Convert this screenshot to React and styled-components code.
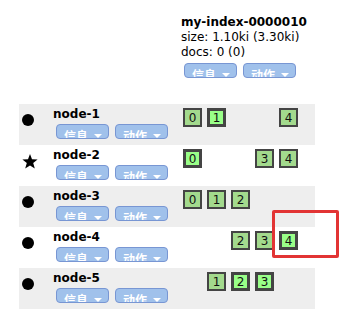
import styled, { createGlobalStyle } from "styled-components";

const GlobalStyle = createGlobalStyle`
    body{
        margin: 0;
        background: #ffffff;
        font-family: 'DejaVu Sans', Verdana, sans-serif;
        color: #000000;
    }
`;

const nodes = [
    { name: 'node-1', master: false, shards: [[0, false], [1, true], null, null, [4, false]] },
    { name: 'node-2', master: true, shards: [[0, true], null, null, [3, false], [4, false]] },
    { name: 'node-3', master: false, shards: [[0, false], [1, false], [2, false], null, null] },
    { name: 'node-4', master: false, shards: [null, null, [2, false], [3, false], [4, true]] },
    { name: 'node-5', master: false, shards: [null, [1, false], [2, true], [3, true], null] },
];

function MenuButton({ label }){
    return(
        <Button>
            <span>{label}</span>
            <Caret />
        </Button>
    );
}

function Star(){
    return(
        <svg width="16" height="15" viewBox="0 0 16 15">
            <polygon points="8,0 10,5.3 15.6,5.5 11.2,9 12.8,14.6 8,11.4 3.2,14.6 4.8,9 0.4,5.5 6,5.3" fill="#000" />
        </svg>
    );
}

export default function App (){
    return(
    <>
        <GlobalStyle />
        <Page>
            <Header>
                <Spacer />
                <IndexInfo>
                    <h1>my-index-0000010</h1>
                    <p>size: 1.10ki (3.30ki)</p>
                    <p>docs: 0 (0)</p>
                    <Buttons>
                        <MenuButton label="信息" />
                        <MenuButton label="动作" />
                    </Buttons>
                </IndexInfo>
            </Header>
            {nodes.map((n, i) => (
                <Row key={n.name} $shaded={i % 2 === 0}>
                    <IconCell $master={n.master}>
                        {n.master ? <Star /> : <Dot />}
                    </IconCell>
                    <NameCell>
                        <h2>{n.name}</h2>
                        <Buttons>
                            <MenuButton label="信息" />
                            <MenuButton label="动作" />
                        </Buttons>
                    </NameCell>
                    <ShardCell>
                        {n.shards.map((s, j) => s
                            ? <Shard key={j} $primary={s[1]}>{s[0]}</Shard>
                            : <Empty key={j} />
                        )}
                    </ShardCell>
                </Row>
            ))}
            <Highlight />
        </Page>
    </>);
}

const Page = styled.div`
    position: relative;
    padding-left: 19px;
    width: 296px;
`;
const Header = styled.div`
    display: flex;
    padding: 15px 0 26px 0;
`;
const Spacer = styled.div`
    width: 162px;
`;
const IndexInfo = styled.div`
    h1{
        margin: 0;
        font-size: 12px;
        font-weight: 700;
        line-height: 15px;
    }
    p{
        margin: 0;
        font-size: 12px;
        line-height: 15px;
    }
    & > div{
        margin-top: 3px;
    }
`;
const Row = styled.div`
    display: flex;
    align-items: flex-start;
    height: 41px;
    background: ${p => p.$shaded ? '#eeeeee' : 'transparent'};
`;
const IconCell = styled.div`
    width: 34px;
    box-sizing: border-box;
    padding: ${p => p.$master ? '9px 0 0 3px' : '10px 0 0 3px'};
    display: flex;
`;
const Dot = styled.div`
    width: 12px;
    height: 12px;
    border-radius: 50%;
    background: #000000;
`;
const NameCell = styled.div`
    width: 128px;
    padding-top: 3px;
    h2{
        margin: 0;
        font-size: 12px;
        font-weight: 700;
        line-height: 15px;
    }
    & > div{
        margin-top: 2px;
    }
`;
const Buttons = styled.div`
    display: flex;
    gap: 6px;
    padding-left: 3px;
`;
const Button = styled.div`
    box-sizing: border-box;
    width: 53px;
    height: 15px;
    overflow: hidden;
    background: #a0c1eb;
    border: 1px solid #7896d3;
    border-radius: 4px;
    display: flex;
    align-items: flex-start;
    padding: 3px 0 0 7px;
    color: #ffffff;
    font-family: 'Noto Sans CJK SC', sans-serif;
    font-weight: 700;
    font-size: 12px;
    line-height: 15px;
    span{
        width: 30px;
    }
`;
const Caret = styled.i`
    width: 0;
    height: 0;
    margin-top: 6px;
    border-left: 4.5px solid transparent;
    border-right: 4.5px solid transparent;
    border-top: 4px solid #ffffff;
`;
const ShardCell = styled.div`
    display: flex;
    gap: 5px;
    padding: 4px 0 0 2px;
`;
const Shard = styled.div`
    box-sizing: border-box;
    width: 19px;
    height: 19px;
    border: ${p => p.$primary ? '3px' : '2px'} solid #444444;
    background: ${p => p.$primary ? '#99ff88' : '#a3da8d'};
    display: flex;
    align-items: center;
    justify-content: center;
    font-size: 12px;
    color: #111111;
`;
const Empty = styled.div`
    width: 19px;
    height: 19px;
`;
const Highlight = styled.div`
    position: absolute;
    left: 272px;
    top: 210px;
    width: 67px;
    height: 48px;
    box-sizing: border-box;
    border: 3px solid #e23434;
    border-radius: 2px;
`;
